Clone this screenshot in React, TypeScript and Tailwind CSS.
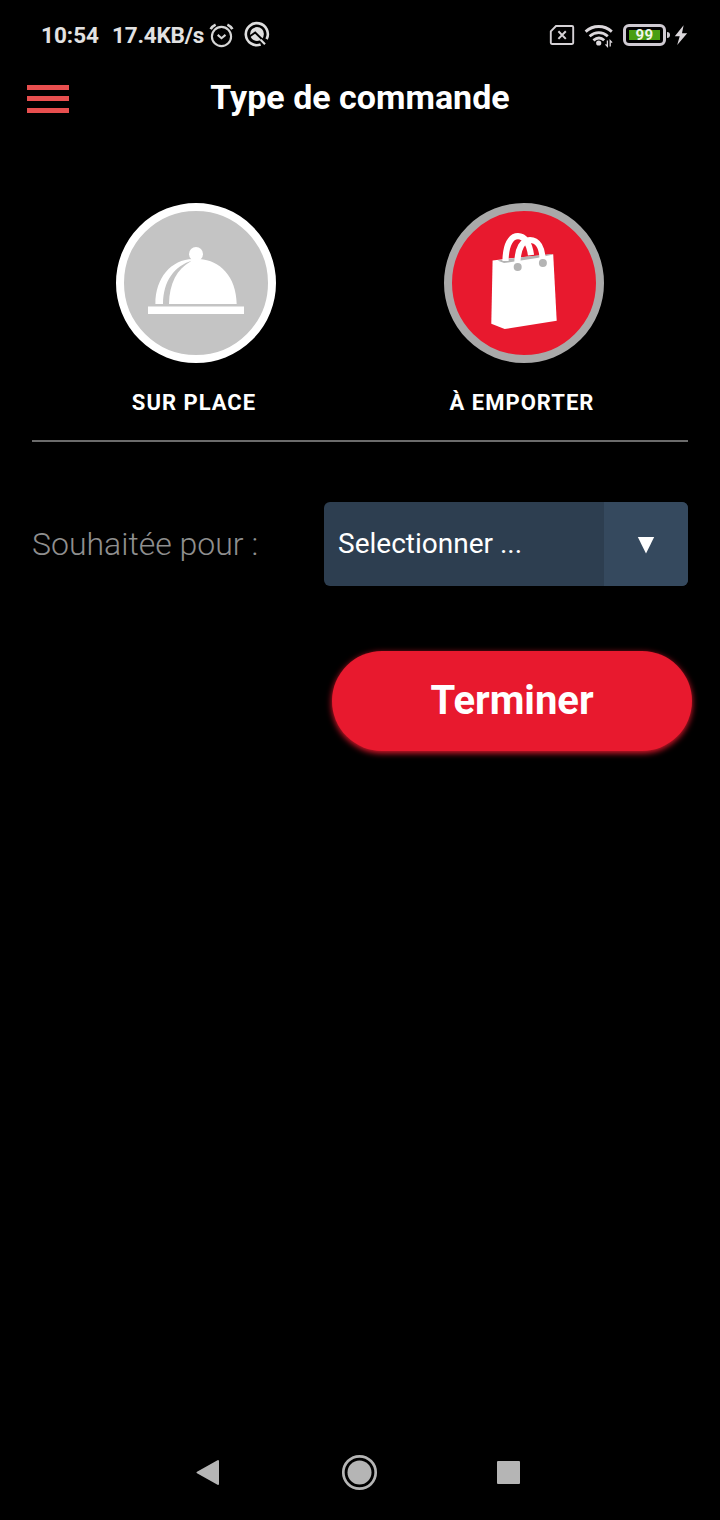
import type { ReactNode } from "react";

function AlarmIcon() {
  return (
    <svg width="28" height="28" viewBox="0 0 28 28" fill="none" stroke="#d6d6d6">
      <circle cx="13.5" cy="15.5" r="9.6" strokeWidth="2.1" />
      <path d="M9.7 13.9l3.8 3.3 4-3.3" strokeWidth="2.1" />
      <path d="M2.6 8.2c1-1.8 2.8-3.6 5-4.6M24.4 8.2c-1-1.8-2.8-3.6-5-4.6" strokeWidth="2.6" />
    </svg>
  );
}

function DataSaverIcon() {
  return (
    <svg width="28" height="28" viewBox="0 0 28 28" fill="none">
      <path d="M17.6 24.5A11 11 0 1 1 23.6 19.2" stroke="#dedede" strokeWidth="2.6" />
      <circle cx="14" cy="14" r="6.9" fill="#dedede" />
      <path d="M6.6 16.6l5.6-4 9.6 9.4" stroke="#000" strokeWidth="1.9" />
      <path d="M17.6 19.8l4.4 4.4" stroke="#dedede" strokeWidth="2.2" />
    </svg>
  );
}

function NoSimIcon() {
  return (
    <svg width="26" height="22" viewBox="0 0 26 22" fill="none" stroke="#d6d2d6">
      <path d="M7 2h16a1.2 1.2 0 0 1 1.2 1.2v15.6A1.2 1.2 0 0 1 23 20H3a1.2 1.2 0 0 1-1.2-1.2V7.4z" strokeWidth="1.9" />
      <path d="M9.4 7.3l7.4 7.6M16.8 7.3l-7.4 7.6" strokeWidth="2" />
    </svg>
  );
}

function WifiIcon() {
  return (
    <svg width="30" height="26" viewBox="0 0 30 26" fill="none" stroke="#dcd8dc" strokeWidth="2.8">
      <path d="M1.6 8.6c7.6-6.8 18.6-6.8 26.2 0" />
      <path d="M5.6 13.2c5.6-4.8 12.8-4.8 18.2 0" />
      <path d="M9.4 17.3c3.600-3 7.600-3 10.800 0" />
      <circle cx="14.7" cy="20" r="2.6" fill="#dcd8dc" stroke="none" />
      <path d="M23.4 17.6v5.800l-1.900-2M26.200 23.400v-5.800l1.900 2" strokeWidth="1.3" />
    </svg>
  );
}

function BoltIcon() {
  return (
    <svg width="14" height="22" viewBox="0 0 14 22" fill="#dcd8dc">
      <path d="M9.600 1.200L.8 12.200h4.900L3.200 21 13.200 9.200H8z" />
    </svg>
  );
}

function Battery({ nivel }: { nivel: number }) {
  return (
    <div className="flex items-center gap-px">
      <div className="flex h-[22px] w-[43px] rounded-[6px] border-[3px] border-[#cfcad2] p-[3px]">
        <div className="flex flex-1 items-center justify-center bg-[#489e12] text-[15px] font-bold leading-none tracking-[0.5px] text-[#f0f5ea]">
          {nivel}
        </div>
      </div>
      <div className="h-[6px] w-[3px] rounded-r-sm bg-[#cfcad2]" />
    </div>
  );
}

function StatusBar() {
  return (
    <div className="flex h-[70px] items-center pl-[41px] text-[22.5px] font-bold text-[#e2e2e2]">
      <span className="w-[71px] whitespace-nowrap pt-[2px]">10:54</span>
      <span className="w-[96px] whitespace-nowrap pt-[2px] tracking-[-0.2px]">17.4KB/s</span>
      <AlarmIcon />
      <div className="ml-[7px] -mt-[2px]">
        <DataSaverIcon />
      </div>
      <div className="ml-[278px]">
        <NoSimIcon />
      </div>
      <div className="ml-[9px] mt-[1px]">
        <WifiIcon />
      </div>
      <div className="ml-[9px]">
        <Battery nivel={99} />
      </div>
      <div className="ml-1">
        <BoltIcon />
      </div>
    </div>
  );
}

function Header() {
  return (
    <div className="grid h-[58px] grid-cols-[180px_1fr_180px] items-center">
      <button className="mb-px ml-[27px] flex w-[42px] flex-col gap-[6.500px]">
        <span className="h-[5px] bg-[#e84f4f]" />
        <span className="h-[5px] bg-[#e84f4f]" />
        <span className="h-[5px] bg-[#e84f4f]" />
      </button>
      <h1 className="mb-1 whitespace-nowrap text-center text-[34px] font-bold leading-10 text-white">
        Type de commande
      </h1>
    </div>
  );
}

function ClocheIcon() {
  return (
    <svg width="144" height="144" viewBox="8 8 144 144" fill="#fff">
      <circle cx="80" cy="51" r="7" />
      <path d="M53 101C53.4 80 61 66 74.5 58.4L76 55.9h7.5C104 57.5 120.2 73 120.7 101z" />
      <path d="M39.4 101C39.4 75 55 56.5 77 56v1.2C58 63 47.3 78 47 101z" />
      <rect x="32" y="103.5" width="96" height="7.5" />
    </svg>
  );
}

function BagIcon() {
  return (
    <svg width="144" height="144" viewBox="8 8 144 144" fill="none">
      <path d="M48.6 57.5l12-1.6 48.6-4.6 3.5 66.4-52 8.300-13.400-5.300z" fill="#fff" />
      <path d="M53.500 57.600l17-2.500 36.500-4.200 1 .8-15 3.200-33 5.200z" fill="#b4b4b4" />
      <path d="M61.500 58C61.800 41 67 33.200 74 33.200c6.500 0 11.500 7 13 19" stroke="#fff" strokeWidth="6.200" />
      <path d="M73.400 61C73.400 45 78.800 37 86 37c8 0 12.300 8.200 12.700 20" stroke="#fff" strokeWidth="6.200" />
      <circle cx="73.700" cy="64" r="4" fill="#b4b4b4" />
      <circle cx="98.900" cy="60" r="4" fill="#b4b4b4" />
    </svg>
  );
}

interface OptionProps {
  label: string;
  actif?: boolean;
  children: ReactNode;
}

function OptionCommande({ label, actif, children }: OptionProps) {
  return (
    <button className="flex flex-col items-center">
      <span
        className={
          actif
            ? "flex size-40 items-center justify-center rounded-full border-8 border-[#a9a9a9] bg-[#e8192e]"
            : "flex size-40 items-center justify-center rounded-full border-8 border-white bg-[#c4c4c4]"
        }
      >
        {children}
      </span>
      <span className="mr-1 mt-[25px] whitespace-nowrap text-[22px] font-bold leading-[30px] tracking-[1px] text-white">
        {label}
      </span>
    </button>
  );
}

function NavBar() {
  return (
    <div className="mt-auto flex h-24 items-center pl-[195px]">
      <svg width="26" height="28" viewBox="0 0 26 28">
        <path d="M2.5 14.500L23 3v23z" fill="#b5b5b5" stroke="#b5b5b5" strokeWidth="2" strokeLinejoin="round" />
      </svg>
      <svg className="ml-[120px]" width="37" height="37" viewBox="0 0 37 37">
        <circle cx="18.5" cy="18.5" r="16.2" fill="none" stroke="#b5b5b5" strokeWidth="2.7" />
        <circle cx="18.5" cy="18.5" r="12" fill="#b5b5b5" />
      </svg>
      <div className="ml-[119px] size-[23px] rounded-[1px] bg-[#b5b5b5]" />
    </div>
  );
}

export default function App() {
  return (
    <div className="flex h-[1520px] w-[720px] flex-col overflow-hidden bg-black font-['Roboto',sans-serif]">
      <StatusBar />
      <Header />

      <div className="mx-8 mt-[75px] grid h-[239px] grid-cols-2 border-b-2 border-[#6b6b6b]">
        <OptionCommande label="SUR PLACE">
          <ClocheIcon />
        </OptionCommande>
        <OptionCommande label="À EMPORTER" actif>
          <BagIcon />
        </OptionCommande>
      </div>

      {/* Heure souhaitée */}
      <div className="mx-8 mt-[60px] flex h-[84px] items-center justify-between">
        <label className="whitespace-nowrap text-[32px] font-light text-[#8f8f8f]">
          Souhaitée pour :
        </label>
        <button className="flex h-full w-[364px] overflow-hidden rounded-md bg-[#2d3e50] text-left text-white">
          <span className="flex flex-1 items-center pl-[14px] text-[28px]">
            Selectionner ...
          </span>
          <span className="flex w-[84px] items-center justify-center bg-[#35495e] pt-[2px]">
            <svg width="18" height="18" viewBox="0 0 18 18" fill="#fff">
              <path d="M.8 1h16.400L9 17.500z" />
            </svg>
          </span>
        </button>
      </div>

      <button className="ml-[332px] mt-[65px] h-[100px] w-[360px] rounded-full bg-[#e8192e] text-[40px] font-bold text-white shadow-[0_2px_6px_#e8192e]">
        Terminer
      </button>

      <NavBar />
    </div>
  );
}
